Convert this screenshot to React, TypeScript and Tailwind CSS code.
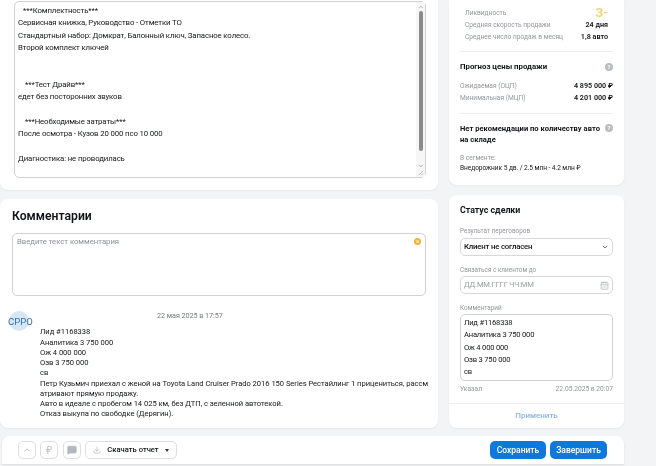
import { ChevronUp, ChevronDown, Download, MessageSquare, CalendarDays, RussianRuble } from 'lucide-react';

const noteLines: [string, string][] = [
  ['***Комплектность***', 'pl-[5px]'],
  ['Сервисная книжка, Руководство - Отметки ТО', ''],
  ['Стандартный набор: Домкрат, Балонный ключ, Запасное колесо.', ''],
  ['Второй комплект ключей', ''],
  ['', ''],
  ['', ''],
  ['***Тест Драйв***', 'pl-[7px]'],
  ['едет без посторонних звуков', ''],
  ['', ''],
  ['***Необходимые затраты***', 'pl-[7px]'],
  ['После осмотра - Кузов 20 000 псо 10 000', ''],
  ['', ''],
  ['Диагностика: не проводилась', ''],
];

const commentLines = ['Лид #1168338', 'Аналитика 3 750 000', 'Ож 4 000 000', 'Озв 3 750 000', 'св'];

function Help() {
  return (
    <span className="flex h-[8px] w-[8px] shrink-0 items-center justify-center rounded-full bg-[#b9bcc0] text-[6px] font-bold leading-none text-white">?</span>
  );
}

function StatRow({ label, value }: { label: string; value: string }) {
  return (
    <div className="flex items-center justify-between whitespace-nowrap">
      <span className="text-[6.6px] text-[#93969c]">{label}</span>
      <span className="font-semibold text-[#111316]">{value}</span>
    </div>
  );
}

function IconButton({ children }: { children: React.ReactNode }) {
  return (
    <button className="flex h-[18px] w-[18px] items-center justify-center rounded-[5px] border border-[#dcdee1] bg-white text-[#b4b7bb]">
      {children}
    </button>
  );
}

export default function App() {
  return (
    <div className="flex h-[466px] w-[656px] flex-col overflow-hidden bg-[#f3f4f6] font-['Roboto',sans-serif] text-[#111316] blur-[0.4px]">
      <div className="flex h-[428px] shrink-0 gap-[11px]">
        {/* left column */}
        <div className="flex w-[438px] flex-col gap-[9px]">
          <div className="h-[190px] shrink-0 rounded-b-[8px] bg-white pl-[14px] pr-[12px] pt-[1px] shadow-[0_1px_2px_rgba(0,0,0,0.05)]">
            <div className="relative h-[177px] rounded-[5px] border border-[#cfd1d4] pl-[3px] pt-[3px] text-[7.8px] leading-[12.3px] tracking-[-0.13px] text-[#15171a]">
              {noteLines.map(([text, cls], i) => (
                <div key={i} className={`h-[12.3px] ${cls}`}>{text}</div>
              ))}
              {/* scrollbar */}
              <div className="absolute bottom-0 right-0 top-0 flex w-[9px] flex-col items-center bg-[#f6f6f6]">
                <ChevronUp size={6} strokeWidth={3} className="mt-[2px] text-[#9a9a9a]" />
                <div className="mt-[1px] h-[140px] w-[4px] rounded-full bg-[#8b8b8b]" />
                <ChevronDown size={6} strokeWidth={3} className="mt-[12px] text-[#9a9a9a]" />
                <svg viewBox="0 0 8 8" className="absolute bottom-[1px] right-[1px] h-[7px] w-[7px] text-[#a5a5a5]">
                  <path d="M7 2 2 7M7 5 5 7" stroke="currentColor" strokeWidth="0.8" fill="none" />
                </svg>
              </div>
            </div>
          </div>

          <div className="flex h-[229px] shrink-0 flex-col rounded-[8px] bg-white px-[12px] pt-[9px] shadow-[0_1px_2px_rgba(0,0,0,0.05)]">
            <h2 className="text-[12.2px] font-semibold leading-[16px]">Комментарии</h2>
            <div className="mt-[9px] flex h-[63px] items-start justify-between rounded-[5px] border border-[#cfd1d4] px-[4px] pt-[3px] text-[7.7px] leading-[10px] text-[#8e9196]">
              <span>Введите текст комментария</span>
              <span className="mt-[1px] flex h-[7px] w-[7px] items-center justify-center rounded-full bg-[#efb23f]">
                <span className="h-[3px] w-[3px] rounded-full bg-[#f8dfa8]" />
              </span>
            </div>
            <div className="mt-[15px] flex">
              <div className="relative -ml-[3px] h-[20px] w-[20px] shrink-0 rounded-full bg-[#d6e6f5]">
                <span className="absolute left-[-1px] top-[5px] text-[9.5px] leading-[11px] text-[#2f6fb3]">СРРО</span>
              </div>
              <div className="ml-[11px] min-w-0 flex-1 whitespace-nowrap text-[7.6px] leading-[10.25px] tracking-[-0.04px] text-[#15171a]">
                <div className="pl-[117px] text-[7.2px] text-[#76797e]">22 мая 2025 в 17:57</div>
                <div className="mt-[6px]">
                  {commentLines.map((l) => <div key={l}>{l}</div>)}
                  <div>Петр Кузьмич приехал с женой на Toyota Land Cruiser Prado 2016 150 Series Рестайлинг 1 прицениться, рассм</div>
                  <div>атривают прямую продажу.</div>
                  <div>Авто в идеале с пробегом 14 025 км, без ДТП, с зеленной автотекой.</div>
                  <div>Отказ выкупа по свободке (Дерягин).</div>
                </div>
              </div>
            </div>
          </div>
        </div>

        {/* right column */}
        <div className="flex w-[175px] flex-col gap-[10px]">
          <div className="h-[185px] shrink-0 rounded-b-[8px] bg-white px-[11px] text-[7.2px] leading-[12px] shadow-[0_1px_2px_rgba(0,0,0,0.05)]">
            <div className="px-[5px] pt-[6px]">
              <div className="flex h-[13px] items-center justify-between">
                <span className="text-[6.6px] text-[#93969c]">Ликвидность</span>
                <span className="text-[13px] font-semibold text-[#eed36c]">З-</span>
              </div>
              <StatRow label="Средняя скорость продажи" value="24 дня" />
              <StatRow label="Среднее число продаж в месяц" value="1,8 авто" />
            </div>
            <div className="mt-[8px] border-t border-[#eceef0] pt-[9px]">
              <div className="flex items-center justify-between text-[7.8px] font-bold">
                <span>Прогноз цены продажи</span>
                <Help />
              </div>
              <div className="mt-[7px]">
                <StatRow label="Ожидаемая (ОЦП)" value="4 895 000 ₽" />
                <StatRow label="Минимальная (МЦП)" value="4 201 000 ₽" />
              </div>
            </div>
            <div className="mt-[9px] border-t border-[#eceef0] pt-[10px]">
              <div className="flex items-start justify-between text-[7.6px] font-bold leading-[10.5px]">
                <span className="w-[145px]">Нет рекомендации по количеству авто на складе</span>
                <Help />
              </div>
              <div className="mt-[7px] text-[6.6px] text-[#93969c]">В сегменте:</div>
              <div className="-mt-[2px] whitespace-nowrap text-[6.6px] tracking-[-0.06px] text-[#15171a]">Внедорожник 5 дв. / 2.5 млн - 4.2 млн ₽</div>
            </div>
          </div>

          <div className="flex h-[233px] shrink-0 flex-col rounded-[8px] bg-white shadow-[0_1px_2px_rgba(0,0,0,0.05)]">
            <div className="flex-1 px-[11px] pt-[9px]">
              <h3 className="text-[8.8px] font-bold leading-[12px]">Статус сделки</h3>
              <div className="mt-[10px] text-[6.4px] leading-[10px] text-[#93969c]">Результат переговоров</div>
              <div className="mt-[2px] flex h-[18px] items-center justify-between rounded-[5px] border border-[#d5d7da] px-[3px] text-[7.8px] font-medium tracking-[-0.2px]">
                <span>Клиент не согласен</span>
                <ChevronDown size={8} strokeWidth={2.5} className="text-[#555]" />
              </div>
              <div className="mt-[9px] text-[6.4px] leading-[10px] text-[#93969c]">Связаться с клиентом до</div>
              <div className="mt-[1px] flex h-[18px] items-center justify-between rounded-[5px] border border-[#d5d7da] px-[3px] text-[7.6px] tracking-[-0.2px] text-[#9a9da3]">
                <span>ДД.ММ.ГГГГ ЧЧ:ММ</span>
                <CalendarDays size={9} className="text-[#b4b7bb]" />
              </div>
              <div className="mt-[9px] text-[6.4px] leading-[10px] text-[#93969c]">Комментарий</div>
              <div className="mt-[1px] h-[67px] overflow-hidden rounded-[5px] border border-[#cfd1d4] px-[3px] pt-[2px] text-[7.6px] leading-[12.3px] tracking-[-0.2px] text-[#15171a]">
                {commentLines.map((l) => <div key={l}>{l}</div>)}
              </div>
              <div className="mt-[3px] flex justify-between text-[6.7px] leading-[10px] text-[#93969c]">
                <span>Указал</span>
                <span>22.05.2025 в 20:07</span>
              </div>
            </div>
            <div className="flex h-[25px] items-center justify-center border-t border-[#eceef0] text-[8px] font-medium text-[#8db4dc]">Применить</div>
          </div>
        </div>
      </div>

      {/* bottom bar */}
      <div className="ml-[2px] mt-[8px] flex h-[28px] w-[622px] items-center justify-between rounded-t-[8px] bg-white pl-[16px] pr-[17px] shadow-[0_1px_2px_rgba(0,0,0,0.1)]">
        <div className="flex items-center gap-[4px]">
          <IconButton><ChevronUp size={10} /></IconButton>
          <IconButton><RussianRuble size={10} /></IconButton>
          <div className="ml-[1px]"><IconButton><MessageSquare size={10} fill="currentColor" /></IconButton></div>
          <button className="flex h-[18px] w-[92px] items-center justify-center gap-[4px] rounded-[5px] border border-[#dcdee1] bg-white text-[7.6px] font-medium">
            <Download size={8} className="text-[#b4b7bb]" />
            <span className="ml-[2px]">Скачать отчет</span>
            <span className="ml-[2px] h-0 w-0 border-x-[2.5px] border-t-[3px] border-x-transparent border-t-[#333]" />
          </button>
        </div>
        <div className="flex items-center gap-[4px]">
          <button className="flex h-[18px] w-[56px] items-center justify-center rounded-[5px] bg-[#0f78dc] text-[8.5px] font-medium text-white">Сохранить</button>
          <button className="flex h-[18px] w-[57px] items-center justify-center rounded-[5px] bg-[#0f78dc] text-[8.5px] font-medium text-white">Завершить</button>
        </div>
      </div>
    </div>
  );
}
